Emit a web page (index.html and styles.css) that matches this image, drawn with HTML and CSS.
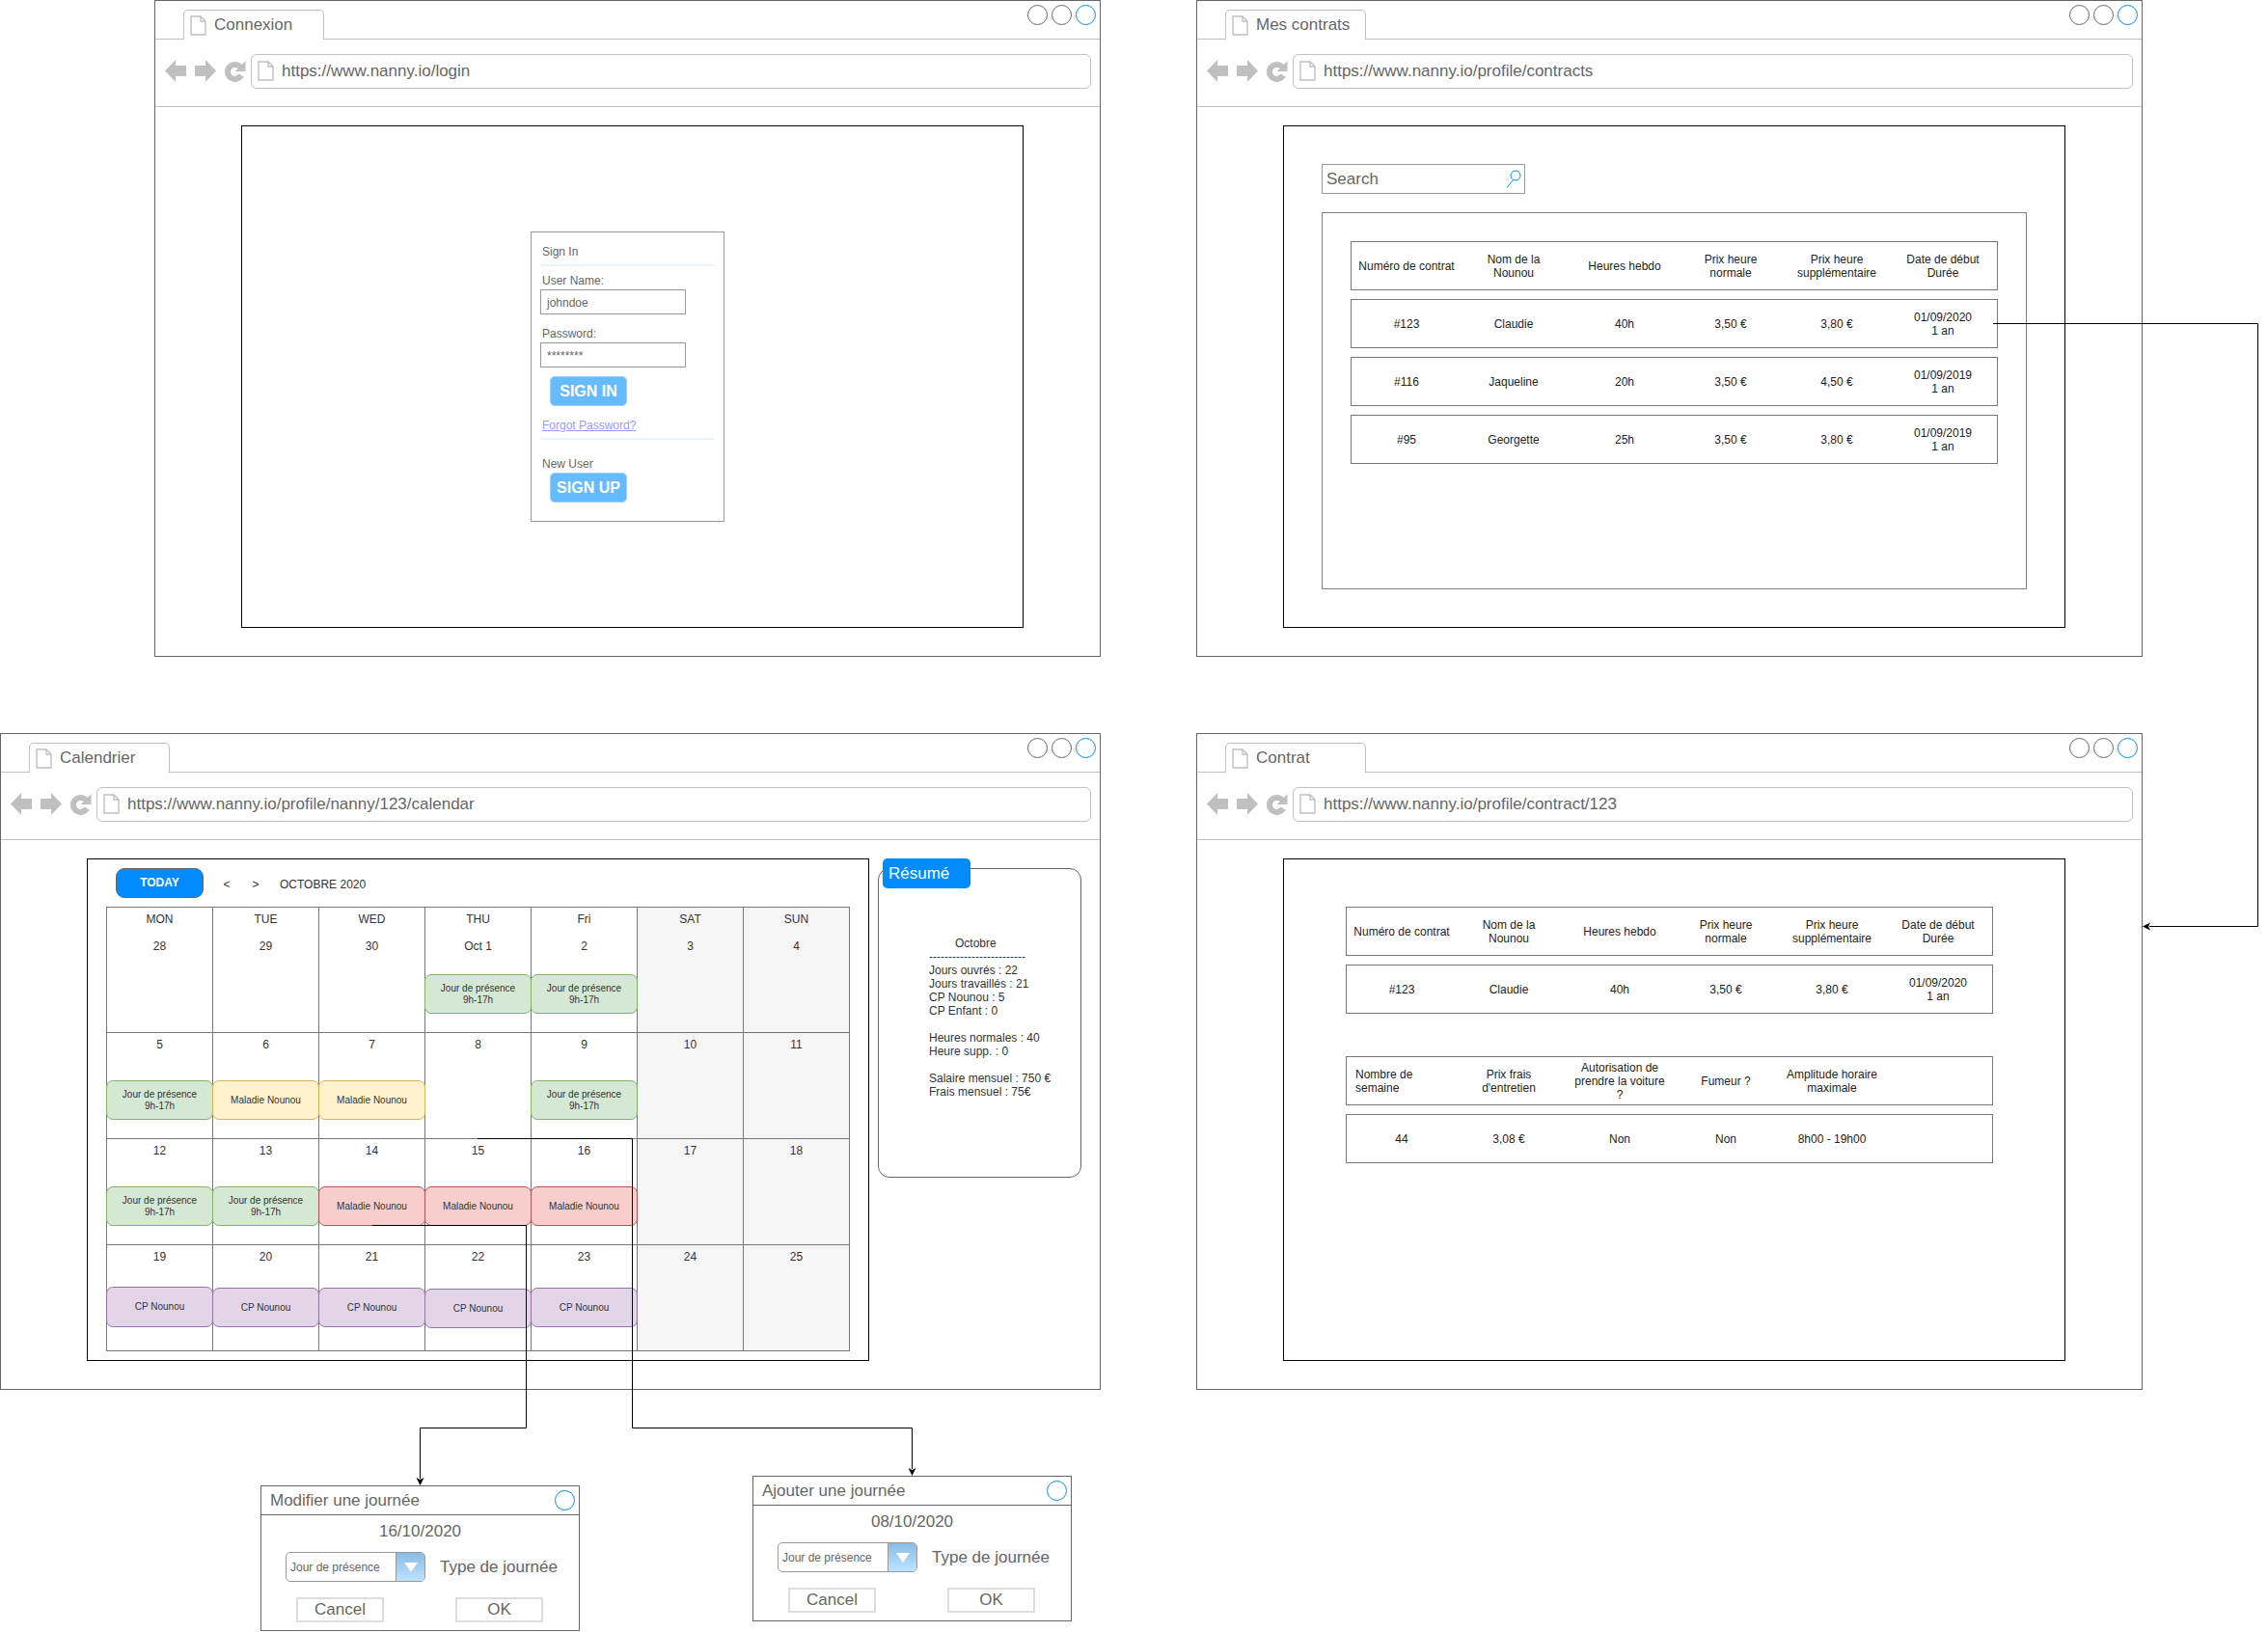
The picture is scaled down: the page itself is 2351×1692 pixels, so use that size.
FILE: index.html
```html
<!DOCTYPE html>
<html lang="fr">
<head>
    <meta charset="UTF-8">
    <title>Nanny wireframes</title>
    <link rel="stylesheet" href="styles.css">
</head>
<body>
<div class="canvas">

    <svg width="0" height="0" class="defs">
        <defs>
            <symbol id="doc" viewBox="0 0 17 21">
                <path d="M1 1H11L16 6V20H1Z M11 1V6H16" fill="#fff" stroke="#c0c0c0" stroke-width="1.4"/>
            </symbol>
            <symbol id="back" viewBox="0 0 22 23">
                <path d="M0 11.5L11 0V6H22V17H11V23Z" fill="#c0c0c0"/>
            </symbol>
            <symbol id="forward" viewBox="0 0 22 23">
                <path d="M22 11.5L11 0V6H0V17H11V23Z" fill="#c0c0c0"/>
            </symbol>
            <symbol id="reload" viewBox="0 0 22 23">
                <path d="M16.5 8A7.5 7.5 0 1 0 17 16" fill="none" stroke="#c0c0c0" stroke-width="6"/>
                <path d="M21.5 1V12H11Z" fill="#c0c0c0"/>
            </symbol>
        </defs>
    </svg>

    <!-- Connexion -->
    <section class="window win-login">
        <div class="tabbar">
            <div class="tab"><svg class="doc-icon"><use href="#doc"/></svg>Connexion</div>
            <div class="dots"><i class="dot"></i><i class="dot"></i><i class="dot dot-blue"></i></div>
        </div>
        <div class="addressbar">
            <svg class="nav-icon"><use href="#back"/></svg>
            <svg class="nav-icon"><use href="#forward"/></svg>
            <svg class="nav-icon"><use href="#reload"/></svg>
            <div class="url"><svg class="doc-icon"><use href="#doc"/></svg>https://www.nanny.io/login</div>
        </div>
        <div class="body">
            <div class="frame">
                <div class="login">
                    <p class="login-title">Sign In</p>
                    <div class="login-rule"></div>
                    <p class="login-label first">User Name:</p>
                    <div class="login-input">johndoe</div>
                    <p class="login-label">Password:</p>
                    <div class="login-input">********</div>
                    <button class="login-btn">SIGN IN</button>
                    <a class="login-link">Forgot Password?</a>
                    <div class="login-rule"></div>
                    <p class="login-label newuser">New User</p>
                    <button class="login-btn signup">SIGN UP</button>
                </div>
            </div>
        </div>
    </section>

    <!-- Mes contrats -->
    <section class="window win-contracts">
        <div class="tabbar">
            <div class="tab"><svg class="doc-icon"><use href="#doc"/></svg>Mes contrats</div>
            <div class="dots"><i class="dot"></i><i class="dot"></i><i class="dot dot-blue"></i></div>
        </div>
        <div class="addressbar">
            <svg class="nav-icon"><use href="#back"/></svg>
            <svg class="nav-icon"><use href="#forward"/></svg>
            <svg class="nav-icon"><use href="#reload"/></svg>
            <div class="url"><svg class="doc-icon"><use href="#doc"/></svg>https://www.nanny.io/profile/contracts</div>
        </div>
        <div class="body">
            <div class="frame frame-contracts">
                <div class="search">
                    <span>Search</span>
                    <svg width="16" height="19" viewBox="0 0 16 19"><circle cx="10" cy="6" r="5" fill="none" stroke="#008cff"/><path d="M7.5 10.5L1 18.5" stroke="#008cff" fill="none"/></svg>
                </div>
                <div class="panel">
                    <div class="row">
                        <div>Numéro de contrat</div><div>Nom de la<br>Nounou</div><div>Heures hebdo</div><div>Prix heure<br>normale</div><div>Prix heure<br>supplémentaire</div><div>Date de début<br>Durée</div>
                    </div>
                    <div class="row">
                        <div>#123</div><div>Claudie</div><div>40h</div><div>3,50 €</div><div>3,80 €</div><div>01/09/2020<br>1 an</div>
                    </div>
                    <div class="row">
                        <div>#116</div><div>Jaqueline</div><div>20h</div><div>3,50 €</div><div>4,50 €</div><div>01/09/2019<br>1 an</div>
                    </div>
                    <div class="row">
                        <div>#95</div><div>Georgette</div><div>25h</div><div>3,50 €</div><div>3,80 €</div><div>01/09/2019<br>1 an</div>
                    </div>
                </div>
            </div>
        </div>
    </section>

    <!-- Calendrier -->
    <section class="window win-calendar">
        <div class="tabbar">
            <div class="tab"><svg class="doc-icon"><use href="#doc"/></svg>Calendrier</div>
            <div class="dots"><i class="dot"></i><i class="dot"></i><i class="dot dot-blue"></i></div>
        </div>
        <div class="addressbar">
            <svg class="nav-icon"><use href="#back"/></svg>
            <svg class="nav-icon"><use href="#forward"/></svg>
            <svg class="nav-icon"><use href="#reload"/></svg>
            <div class="url"><svg class="doc-icon"><use href="#doc"/></svg>https://www.nanny.io/profile/nanny/123/calendar</div>
        </div>
        <div class="body body-calendar">
            <div class="frame">
                <div class="cal-toolbar">
                    <button class="today">TODAY</button>
                    <span class="cal-prev">&lt;</span>
                    <span class="cal-next">&gt;</span>
                    <span class="cal-month">OCTOBRE 2020</span>
                </div>
                <div class="cal-grid">
                    <div class="cell first"><span class="weekday">MON</span><span class="date">28</span></div>
                    <div class="cell first"><span class="weekday">TUE</span><span class="date">29</span></div>
                    <div class="cell first"><span class="weekday">WED</span><span class="date">30</span></div>
                    <div class="cell first"><span class="weekday">THU</span><span class="date">Oct 1</span><div class="event green">Jour de présence<br>9h-17h</div></div>
                    <div class="cell first"><span class="weekday">Fri</span><span class="date">2</span><div class="event green">Jour de présence<br>9h-17h</div></div>
                    <div class="cell first off"><span class="weekday">SAT</span><span class="date">3</span></div>
                    <div class="cell first off"><span class="weekday">SUN</span><span class="date">4</span></div>

                    <div class="cell"><span class="date">5</span><div class="event green">Jour de présence<br>9h-17h</div></div>
                    <div class="cell"><span class="date">6</span><div class="event yellow">Maladie Nounou</div></div>
                    <div class="cell"><span class="date">7</span><div class="event yellow">Maladie Nounou</div></div>
                    <div class="cell"><span class="date">8</span></div>
                    <div class="cell"><span class="date">9</span><div class="event green">Jour de présence<br>9h-17h</div></div>
                    <div class="cell off"><span class="date">10</span></div>
                    <div class="cell off"><span class="date">11</span></div>

                    <div class="cell"><span class="date">12</span><div class="event green">Jour de présence<br>9h-17h</div></div>
                    <div class="cell"><span class="date">13</span><div class="event green">Jour de présence<br>9h-17h</div></div>
                    <div class="cell"><span class="date">14</span><div class="event red">Maladie Nounou</div></div>
                    <div class="cell"><span class="date">15</span><div class="event red">Maladie Nounou</div></div>
                    <div class="cell"><span class="date">16</span><div class="event red">Maladie Nounou</div></div>
                    <div class="cell off"><span class="date">17</span></div>
                    <div class="cell off"><span class="date">18</span></div>

                    <div class="cell last"><span class="date">19</span><div class="event purple raised">CP Nounou</div></div>
                    <div class="cell last"><span class="date">20</span><div class="event purple">CP Nounou</div></div>
                    <div class="cell last"><span class="date">21</span><div class="event purple">CP Nounou</div></div>
                    <div class="cell last"><span class="date">22</span><div class="event purple lowered">CP Nounou</div></div>
                    <div class="cell last"><span class="date">23</span><div class="event purple">CP Nounou</div></div>
                    <div class="cell last off"><span class="date">24</span></div>
                    <div class="cell last off"><span class="date">25</span></div>
                </div>
            </div>
            <aside class="resume">
                <div class="resume-tab">Résumé</div>
                <p class="resume-month">Octobre</p>
                <p class="resume-text">-------------------------<br>Jours ouvrés : 22<br>Jours travaillés : 21<br>CP Nounou : 5<br>CP Enfant : 0<br><br>Heures normales : 40<br>Heure supp. : 0<br><br>Salaire mensuel : 750 €<br>Frais mensuel : 75€</p>
            </aside>
        </div>
    </section>

    <!-- Contrat -->
    <section class="window win-contract">
        <div class="tabbar">
            <div class="tab"><svg class="doc-icon"><use href="#doc"/></svg>Contrat</div>
            <div class="dots"><i class="dot"></i><i class="dot"></i><i class="dot dot-blue"></i></div>
        </div>
        <div class="addressbar">
            <svg class="nav-icon"><use href="#back"/></svg>
            <svg class="nav-icon"><use href="#forward"/></svg>
            <svg class="nav-icon"><use href="#reload"/></svg>
            <div class="url"><svg class="doc-icon"><use href="#doc"/></svg>https://www.nanny.io/profile/contract/123</div>
        </div>
        <div class="body">
            <div class="frame frame-contract">
                <div class="row">
                    <div>Numéro de contrat</div><div>Nom de la<br>Nounou</div><div>Heures hebdo</div><div>Prix heure<br>normale</div><div>Prix heure<br>supplémentaire</div><div>Date de début<br>Durée</div>
                </div>
                <div class="row">
                    <div>#123</div><div>Claudie</div><div>40h</div><div>3,50 €</div><div>3,80 €</div><div>01/09/2020<br>1 an</div>
                </div>
                <div class="row row-split">
                    <div class="cell-left">Nombre de<br>semaine</div><div>Prix frais<br>d'entretien</div><div>Autorisation de<br>prendre la voiture<br>?</div><div>Fumeur ?</div><div>Amplitude horaire<br>maximale</div><div></div>
                </div>
                <div class="row">
                    <div>44</div><div>3,08 €</div><div>Non</div><div>Non</div><div>8h00 - 19h00</div><div></div>
                </div>
            </div>
        </div>
    </section>

    <!-- Popups -->
    <section class="modal modal-edit">
        <header class="modal-head">Modifier une journée<i class="dot dot-blue"></i></header>
        <p class="modal-date">16/10/2020</p>
        <div class="modal-field">
            <div class="combo"><span>Jour de présence</span><i class="combo-arrow"></i></div>
            <span class="modal-label">Type de journée</span>
        </div>
        <div class="modal-actions"><button>Cancel</button><button>OK</button></div>
    </section>

    <section class="modal modal-add">
        <header class="modal-head">Ajouter une journée<i class="dot dot-blue"></i></header>
        <p class="modal-date">08/10/2020</p>
        <div class="modal-field">
            <div class="combo"><span>Jour de présence</span><i class="combo-arrow"></i></div>
            <span class="modal-label">Type de journée</span>
        </div>
        <div class="modal-actions"><button>Cancel</button><button>OK</button></div>
    </section>

    <!-- Connectors -->
    <svg class="links" width="2351" height="1692">
        <path d="M2066 335.5H2340.5V960.5H2228" fill="none" stroke="#000"/>
        <path d="M2221 960.5L2229 956.5L2227 960.5L2229 964.5Z" fill="#000"/>
        <path d="M386 1270.5H545.5V1480.5H435.5V1533" fill="none" stroke="#000"/>
        <path d="M435.5 1540L431.5 1532L435.5 1534L439.5 1532Z" fill="#000"/>
        <path d="M495 1180.5H655.5V1480.5H945.5V1523" fill="none" stroke="#000"/>
        <path d="M945.5 1530L941.5 1522L945.5 1524L949.5 1522Z" fill="#000"/>
    </svg>

</div>
</body>
</html>
```

FILE: styles.css
```css
* {
    box-sizing: border-box;
}

body {
    margin: 0;
    background: #fff;
    font-family: "Liberation Sans", Arial, sans-serif;
    font-size: 12px;
    line-height: 14px;
    color: #333;
}

p {
    margin: 0;
}

.canvas {
    position: relative;
    width: 2351px;
    height: 1692px;
    overflow: hidden;
}

.defs {
    position: absolute;
}

.links {
    position: absolute;
    left: 0;
    top: 0;
    pointer-events: none;
}

/* browser windows sit on a free canvas */
.window {
    position: absolute;
    width: 981px;
    height: 681px;
    border: 1px solid #666;
    background: #fff;
}

.win-login { left: 160px; top: 0; }
.win-contracts { left: 1240px; top: 0; }
.win-calendar { left: 0; top: 760px; width: 1141px; }
.win-contract { left: 1240px; top: 760px; }

.tabbar {
    display: flex;
    height: 40px;
    padding-left: 29px;
    border-bottom: 1px solid #c0c0c0;
}

.tab {
    display: flex;
    align-items: center;
    width: 146px;
    height: 31px;
    margin-top: 9px;
    padding-left: 6px;
    border: 1px solid #c0c0c0;
    border-bottom: 0;
    border-radius: 5px 5px 0 0;
    background: #fff;
    font-size: 17px;
    color: #666;
}

.doc-icon {
    flex: none;
    width: 17px;
    height: 21px;
    margin-right: 8px;
}

.dots {
    display: flex;
    gap: 4px;
    margin: 4px 4px 0 auto;
}

.dot {
    display: block;
    width: 21px;
    height: 21px;
    border: 1px solid #666;
    border-radius: 50%;
}

.dot-blue {
    border-color: #008cff;
}

.addressbar {
    display: flex;
    align-items: center;
    height: 70px;
    padding: 0 9px 4px 10px;
    border-bottom: 1px solid #c0c0c0;
}

.nav-icon {
    flex: none;
    width: 22px;
    height: 23px;
    margin-right: 9px;
}

.nav-icon + .nav-icon + .nav-icon {
    margin-right: 5px;
}

.url {
    flex: 1;
    display: flex;
    align-items: center;
    height: 36px;
    padding-left: 6px;
    border: 1px solid #c0c0c0;
    border-radius: 6px;
    font-size: 17px;
    color: #666;
}

.body {
    padding: 19px 0 0 89px;
}

.frame {
    width: 811px;
    height: 521px;
    border: 1px solid #000;
}

.login {
    margin: 109px 0 0 299px;
}

/* login */
.login {
    width: 201px;
    height: 301px;
    padding: 13px 9px 0;
    border: 1px solid #999;
    color: #666;
}

.login-title,
.login-label,
.login-link {
    display: block;
    padding-left: 2px;
}

.login-rule {
    width: 180px;
    height: 2px;
    margin-top: 6px;
    background: #e6f2ff;
}

.login-label {
    margin: 13px 0 2px;
}

.login-label.first {
    margin-top: 8px;
}

.login-label.newuser {
    margin-top: 18px;
}

.login-input {
    width: 151px;
    height: 26px;
    padding: 6px 6px;
    border: 1px solid #999;
}

.login-btn {
    display: block;
    width: 80px;
    height: 31px;
    margin: 9px 0 0 10px;
    padding: 0;
    border: 1px solid #99d0ff;
    border-radius: 5px;
    background: #66bbff;
    font: bold 16px "Liberation Sans", Arial, sans-serif;
    color: #fff;
}

.login-btn.signup {
    margin-top: 1px;
}

.login-link {
    margin-top: 13px;
    color: #9999ff;
    text-decoration: underline;
}

/* contracts */
.frame-contracts {
    padding: 39px 0 0 39px;
}

.search {
    display: flex;
    align-items: center;
    justify-content: space-between;
    width: 211px;
    height: 31px;
    padding: 0 3px 0 4px;
    border: 1px solid #999;
    font-size: 17px;
    color: #666;
}

.panel {
    width: 731px;
    height: 391px;
    margin-top: 19px;
    padding: 29px 0 0 29px;
    border: 1px solid #808080;
}

.row {
    display: grid;
    grid-template-columns: 114px 108px 122px 98px 122px 98px;
    align-items: center;
    width: 671px;
    height: 51px;
    margin-bottom: 9px;
    border: 1px solid #777;
    text-align: center;
    color: #222;
}

.frame-contract {
    padding: 49px 0 0 64px;
}

.row-split {
    margin-top: 44px;
}

.cell-left {
    padding-left: 9px;
    text-align: left;
}

/* calendar */
.body-calendar {
    display: flex;
}

.cal-toolbar {
    display: flex;
    align-items: center;
    height: 30px;
    margin: 9px 0 0 29px;
}

.today {
    width: 91px;
    height: 31px;
    padding: 0;
    border: 1px solid #666;
    border-radius: 9px;
    background: #008cff;
    font: bold 12px "Liberation Sans", Arial, sans-serif;
    color: #fff;
}

.cal-prev,
.cal-next {
    width: 10px;
    text-align: center;
}

.cal-prev {
    margin: 3px 0 0 19px;
}

.cal-next {
    margin: 3px 0 0 20px;
}

.cal-month {
    margin: 3px 0 0 20px;
}

.cal-grid {
    display: grid;
    grid-template-columns: repeat(7, 110px);
    grid-template-rows: 130px 110px 110px 110px;
    width: 771px;
    margin: 10px 0 0 19px;
    border-right: 1px solid #777;
    border-bottom: 1px solid #777;
}

.cell {
    padding-top: 5px;
    border-left: 1px solid #777;
    border-top: 1px solid #777;
    text-align: center;
}

.cell.off {
    background: #f5f5f5;
}

.weekday,
.date {
    display: block;
}

.cell.first .date {
    margin-top: 14px;
}

.event {
    position: relative;
    display: flex;
    align-items: center;
    justify-content: center;
    width: 111px;
    height: 41px;
    margin: 30px 0 0 -1px;
    border: 1px solid;
    border-radius: 7px;
    font-size: 10px;
    line-height: 12px;
}

.cell.first .event {
    margin-top: 22px;
}

.cell.last .event {
    margin-top: 25px;
}

.cell.last .event.raised {
    height: 42px;
    margin-top: 24px;
}

.cell.last .event.lowered {
    margin-top: 26px;
}

.green { background: #d5e8d4; border-color: #82b366; }
.yellow { background: #fff2cc; border-color: #d6b656; }
.red { background: #f8cecc; border-color: #b85450; }
.purple { background: #e1d5e7; border-color: #9673a6; }

.resume {
    position: relative;
    width: 211px;
    height: 321px;
    margin: 10px 0 0 9px;
    padding: 70px 0 0 52px;
    border: 1px solid #666;
    border-radius: 12px;
}

.resume-tab {
    position: absolute;
    left: 4px;
    top: -11px;
    width: 91px;
    height: 31px;
    padding: 6px 0 0 6px;
    border-radius: 5px;
    background: #008cff;
    font-size: 17px;
    line-height: 19px;
    color: #fff;
}

.resume-month {
    padding-left: 27px;
}

/* popups */
.modal {
    position: absolute;
    width: 331px;
    height: 151px;
    border: 1px solid #666;
    background: #fff;
    font-size: 17px;
    color: #666;
}

.modal-edit { left: 270px; top: 1540px; }
.modal-add { left: 780px; top: 1530px; }

.modal-head {
    display: flex;
    align-items: center;
    justify-content: space-between;
    height: 30px;
    padding: 0 4px 0 9px;
    border-bottom: 1px solid #666;
    line-height: 20px;
}

.modal-date {
    margin-top: 7px;
    line-height: 20px;
    text-align: center;
}

.modal-field {
    display: flex;
    align-items: center;
    gap: 15px;
    margin: 11px 0 0 25px;
}

.combo {
    display: flex;
    align-items: center;
    width: 145px;
    height: 31px;
    padding-left: 4px;
    border: 1px solid #999;
    border-radius: 5px;
    overflow: hidden;
    font-size: 12px;
}

.combo span {
    flex: 1;
}

.combo-arrow {
    display: flex;
    align-items: center;
    justify-content: center;
    width: 30px;
    height: 100%;
    border-left: 1px solid #999;
    background: linear-gradient(#8abbe5, #bde3ff);
}

.combo-arrow::after {
    content: "";
    border-top: 10px solid #fff;
    border-left: 7px solid transparent;
    border-right: 7px solid transparent;
}

.modal-label {
    background: #f8f9fa;
    line-height: 18px;
}

.modal-actions {
    display: flex;
    gap: 74px;
    margin: 16px 0 0 36px;
}

.modal-actions button {
    width: 91px;
    height: 26px;
    padding: 0;
    border: 2px solid #ddd;
    background: #fff;
    font: 17px "Liberation Sans", Arial, sans-serif;
    color: #666;
}
```
